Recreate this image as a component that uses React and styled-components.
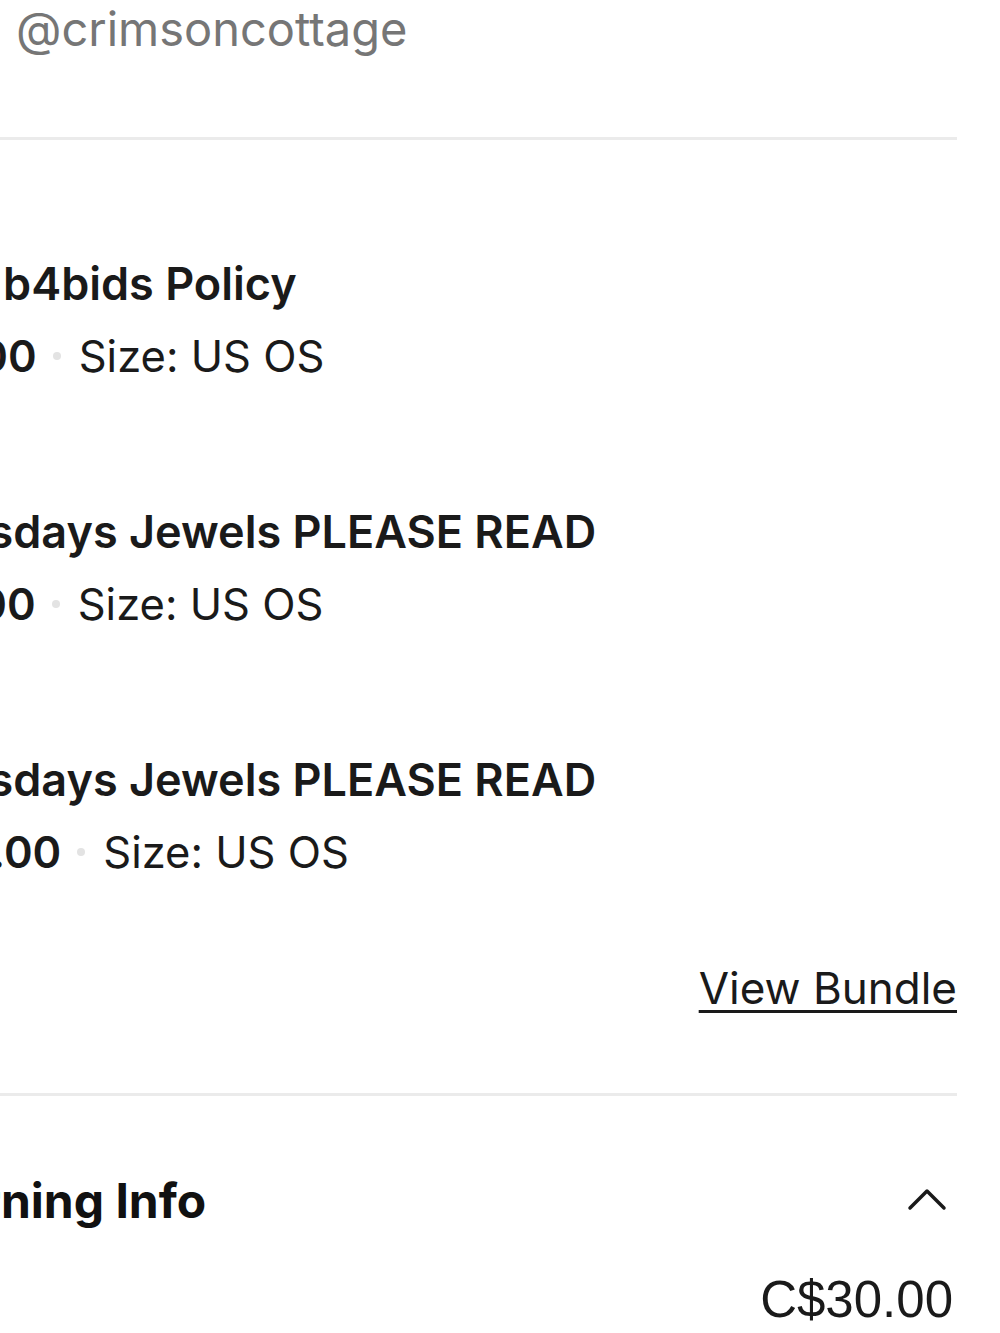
import React from 'react';
import styled, { createGlobalStyle } from 'styled-components';

const GlobalStyle = createGlobalStyle`
  html, body {
    margin: 0;
    padding: 0;
    background: #fff;
    overflow: hidden;
  }
  body {
    font-family: Inter, "Noto Sans", "Liberation Sans", sans-serif;
    color: #1a1a1a;
  }
`;

const Page = styled.div`
  width: 1000px;
  height: 1333px;
  overflow: hidden;
  box-sizing: border-box;
  padding-right: 43px;
`;

const Handle = styled.div`
  font-size: 47px;
  line-height: 1;
  color: #767676;
  padding-left: 16px;
  margin-top: 5px;
  height: 132px;
`;

const Divider = styled.div`
  height: 3px;
  background: #ebebeb;
`;

const ItemList = styled.div`
  display: flex;
  flex-direction: column;
  gap: 126px;
  padding-top: 119px;
`;

const Item = styled.div`
  display: flex;
  flex-direction: column;
  gap: 22px;
  white-space: nowrap;
`;

const ItemTitle = styled.div`
  font-size: 45px;
  font-weight: 600;
  line-height: 50px;
  color: #1a1a1a;
  margin-left: ${(p) => -p.$shift}px;
`;

const Meta = styled.div`
  display: flex;
  align-items: center;
  font-size: 43.5px;
  line-height: 50px;
  color: #1a1a1a;
  margin-left: ${(p) => -p.$shift}px;
`;

const Price = styled.span`
  font-weight: 600;
`;

const Dot = styled.span`
  width: 8px;
  height: 8px;
  border-radius: 50%;
  background: #e3e3e3;
  margin: 0 18px 0 16px;
`;

const BundleRow = styled.div`
  display: flex;
  justify-content: flex-end;
  padding: 86px 0 80px;
`;

const BundleLink = styled.a`
  font-size: 44px;
  line-height: 50px;
  color: #1a1a1a;
  text-decoration: underline;
  text-decoration-thickness: 3px;
  text-underline-offset: 6px;
`;

const SectionHeader = styled.div`
  display: flex;
  align-items: center;
  justify-content: space-between;
  padding-top: 77px;
  white-space: nowrap;
`;

const SectionTitle = styled.div`
  font-size: 48px;
  font-weight: 700;
  line-height: 56px;
  color: #111;
  margin-left: ${(p) => -p.$shift}px;
`;

const Chevron = styled.svg`
  width: 40px;
  height: 26px;
  margin-right: 10px;
  margin-top: -4px;
`;

const Total = styled.div`
  display: flex;
  justify-content: flex-end;
  padding-top: 43px;
  padding-right: 4px;
  font-family: "Liberation Sans", Arial, sans-serif;
  font-size: 51px;
  line-height: 56px;
  color: #1a1a1a;
`;

const items = [
  { title: 'Read b4bids Policy', price: 'C$5.00', size: 'US OS', titleShift: 118, metaShift: 120 },
  { title: 'Tuesdays Jewels PLEASE READ', price: 'C$5.00', size: 'US OS', titleShift: 92, metaShift: 121 },
  { title: 'Tuesdays Jewels PLEASE READ', price: 'C$10.00', size: 'US OS', titleShift: 92, metaShift: 115 },
];

export default function App() {
  return (
    <Page>
      <GlobalStyle />
      <Handle>@crimsoncottage</Handle>
      <Divider />
      <ItemList>
        {items.map((item, i) => (
          <Item key={i}>
            <ItemTitle $shift={item.titleShift}>{item.title}</ItemTitle>
            <Meta $shift={item.metaShift}>
              <Price>{item.price}</Price>
              <Dot />
              <span>Size: {item.size}</span>
            </Meta>
          </Item>
        ))}
      </ItemList>
      <BundleRow>
        <BundleLink>View Bundle</BundleLink>
      </BundleRow>
      <Divider />
      <SectionHeader>
        <SectionTitle $shift={76}>Earning Info</SectionTitle>
        <Chevron viewBox="0 0 40 26" fill="none" stroke="#1a1a1a" strokeWidth="3.5" strokeLinecap="round" strokeLinejoin="round">
          <polyline points="3,22 20,5 37,22" />
        </Chevron>
      </SectionHeader>
      <Total>C$30.00</Total>
    </Page>
  );
}
